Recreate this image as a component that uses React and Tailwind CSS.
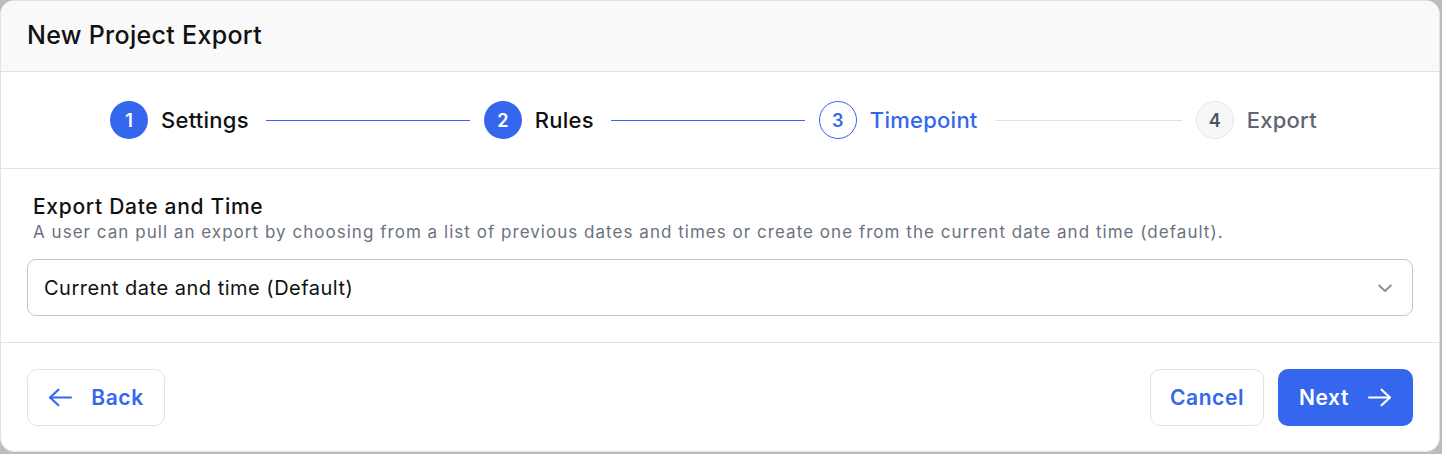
import React from "react";

const font = { fontFamily: "Inter, 'Noto Sans', sans-serif" };

function ArrowLeft({ className }) {
  return (
    <svg viewBox="0 0 24 24" className={className} fill="none" stroke="currentColor" strokeWidth="2.1" strokeLinecap="round" strokeLinejoin="round">
      <path d="M22 12H2" />
      <path d="M10 4.5L2 12l8 7.5" />
    </svg>
  );
}
function ArrowRight({ className }) {
  return (
    <svg viewBox="0 0 24 24" className={className} fill="none" stroke="currentColor" strokeWidth="2.1" strokeLinecap="round" strokeLinejoin="round">
      <path d="M2 12h20" />
      <path d="M14 4.5l8 7.5-8 7.5" />
    </svg>
  );
}

export default function App() {
  return (
    <div className="w-[1442px] h-[454px] bg-[#bcbcbc]" style={font}>
      <div className="w-[1440px] h-[452px] bg-white rounded-[14px] border border-[#e3e3e3] overflow-hidden flex flex-col">
        <div className="h-[71px] shrink-0 bg-[#f9f9f9] border-b border-[#e2e2e2] flex items-center pl-[26px]">
          <h1 className="text-[25px] font-medium text-[#111] tracking-[0.3px]">New Project Export</h1>
        </div>
        <div className="h-[97px] shrink-0 border-b border-[#e2e2e2] flex items-center pl-[109px] pr-[122px]">
          <div className="w-[38px] h-[38px] rounded-full bg-[#3467ee] text-white flex items-center justify-center text-[18px] font-semibold">1</div>
          <span className="ml-[13px] text-[22px] font-medium text-[#111] tracking-[0.25px]">Settings</span>
          <div className="w-[204px] h-px bg-[#3467ee] ml-[17px] mr-[14px]" />
          <div className="w-[38px] h-[38px] rounded-full bg-[#3467ee] text-white flex items-center justify-center text-[18px] font-semibold">2</div>
          <span className="ml-[13px] text-[22px] font-medium text-[#111] tracking-[0.25px]">Rules</span>
          <div className="w-[194px] h-px bg-[#3467ee] ml-[17px] mr-[14px]" />
          <div className="w-[38px] h-[38px] rounded-full border border-[#3467ee] text-[#3467ee] flex items-center justify-center text-[18px] font-semibold">3</div>
          <span className="ml-[13px] text-[22px] font-medium text-[#3467ee] tracking-[0.25px]">Timepoint</span>
          <div className="flex-1 h-px bg-[#e2e2e2] ml-[17px] mr-[14px]" />
          <div className="w-[38px] h-[38px] rounded-full border border-[#e5e7eb] bg-[#f7f7f8] text-[#4b5563] flex items-center justify-center text-[18px] font-semibold">4</div>
          <span className="ml-[13px] text-[22px] font-medium text-[#5f6672] tracking-[0.25px]">Export</span>
        </div>
        <div className="h-[174px] shrink-0 border-b border-[#e2e2e2] px-[26px] pt-[24px]">
          <div className="pl-[6px]">
            <div className="text-[21px] font-medium text-[#111] leading-[28px] tracking-[0.7px]">Export Date and Time</div>
            <div className="text-[17px] text-[#6b7280] leading-[22px] tracking-[1.03px]">A user can pull an export by choosing from a list of previous dates and times or create one from the current date and time (default).</div>
          </div>
          <div className="mt-[16px] h-[57px] rounded-[9px] border border-[#c6c6c6] flex items-center justify-between pl-[16px] pr-[17px]">
            <span className="text-[20px] text-[#111] tracking-[0.5px]">Current date and time (Default)</span>
            <svg viewBox="0 0 24 24" className="w-[20px] h-[20px] text-[#8a919c]" fill="none" stroke="currentColor" strokeWidth="2.4" strokeLinecap="round" strokeLinejoin="round">
              <path d="M5 9l7 6.5 7-6.5" />
            </svg>
          </div>
        </div>
        <div className="flex-1 flex items-center justify-between px-[26px] pt-[1px]">
          <button className="h-[57px] w-[138px] rounded-[10px] border border-[#e3e3e3] bg-white text-[#3467ee] flex items-center justify-center gap-[18px] text-[21px] font-semibold tracking-[0.6px]">
            <ArrowLeft className="w-[25px] h-[25px]" />
            <span>Back</span>
          </button>
          <div className="flex items-center gap-[14px]">
            <button className="h-[57px] w-[114px] rounded-[10px] border border-[#e3e3e3] bg-white text-[#3467ee] flex items-center justify-center text-[21px] font-semibold tracking-[0.6px]">Cancel</button>
            <button className="h-[57px] w-[135px] rounded-[10px] bg-[#3467ee] text-white flex items-center justify-center gap-[18px] text-[21px] font-semibold tracking-[0.6px]">
              <span>Next</span>
              <ArrowRight className="w-[25px] h-[25px]" />
            </button>
          </div>
        </div>
      </div>
    </div>
  );
}
